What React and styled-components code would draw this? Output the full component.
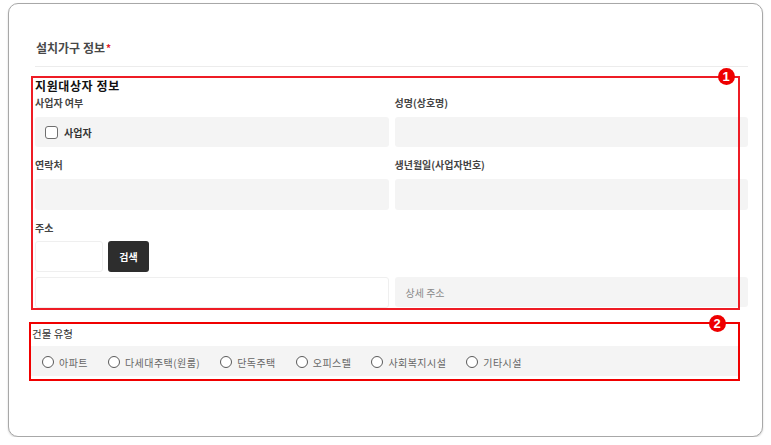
import React from "react";
import styled, { createGlobalStyle } from "styled-components";

const GlobalStyle = createGlobalStyle`
  html, body {
    margin: 0;
    padding: 0;
    background: #ffffff;
  }
  body {
    font-family: "Noto Sans CJK KR", "Noto Sans", sans-serif;
  }
`;

const buildingTypes = ["아파트", "다세대주택(원룸)", "단독주택", "오피스텔", "사회복지시설", "기타시설"];

function App() {
  return (
    <>
      <GlobalStyle />
      <Card>
        <Title>
          설치가구 정보<Required>*</Required>
        </Title>
        <Divider />

        <Section>
          <Marker $top={-2} $left={-4} $right={8} $bottom={-2} />
          <Badge $top={-10.5} $right={13.5}>1</Badge>
          <Heading>지원대상자 정보</Heading>
          <FieldGrid>
            <Field>
              <Label>사업자 여부</Label>
              <GrayBox $pad>
                <CheckBox />
                <CheckText>사업자</CheckText>
              </GrayBox>
            </Field>
            <Field>
              <Label>성명(상호명)</Label>
              <GrayBox />
            </Field>
            <Field>
              <Label>연락처</Label>
              <GrayBox $h={31} />
            </Field>
            <Field>
              <Label>생년월일(사업자번호)</Label>
              <GrayBox $h={31} />
            </Field>
          </FieldGrid>

          <AddressLabel>주소</AddressLabel>
          <PostRow>
            <WhiteBox $w={68} />
            <SearchButton>검색</SearchButton>
          </PostRow>
          <AddressRow>
            <WhiteBox />
            <GrayBox $pad>
              <Placeholder>상세 주소</Placeholder>
            </GrayBox>
          </AddressRow>
        </Section>

        <BuildingSection>
          <Marker $top={-5} $left={-2} $right={-1} $bottom={-5} $thick />
          <Badge $top={-12.5} $right={13.5}>2</Badge>
          <BuildingLabel>건물 유형</BuildingLabel>
          <RadioBar>
            {buildingTypes.map((t) => (
              <RadioItem key={t}>
                <RadioCircle />
                <RadioText>{t}</RadioText>
              </RadioItem>
            ))}
          </RadioBar>
        </BuildingSection>
      </Card>
    </>
  );
}

export default App;

const Card = styled.div`
  position: relative;
  box-sizing: border-box;
  margin: 3px 0 0 8px;
  width: 755px;
  height: 434px;
  border: 1px solid #a8a8a8;
  border-radius: 10px;
  box-shadow: 0 1px 2px rgba(0, 0, 0, 0.18);
  padding: 35px 14px 0 26px;
  background: #fff;
`;

const Title = styled.div`
  font-size: 12px;
  line-height: 18px;
  font-weight: 700;
  color: #484848;
  padding-left: 1px;
`;

const Required = styled.span`
  color: #e0202a;
  font-size: 10px;
  vertical-align: top;
  margin-left: 1px;
`;

const Divider = styled.div`
  height: 1px;
  background: #ececec;
  margin-top: 9px;
`;

const Section = styled.div`
  position: relative;
  margin-top: 11px;
`;

const Marker = styled.div`
  position: absolute;
  top: ${(p) => p.$top}px;
  left: ${(p) => p.$left}px;
  right: ${(p) => p.$right}px;
  bottom: ${(p) => p.$bottom}px;
  border: ${(p) => (p.$thick ? "2.5px solid #f00000" : "2px solid #ee1c25")};
  pointer-events: none;
`;

const Badge = styled.div`
  position: absolute;
  top: ${(p) => p.$top}px;
  right: ${(p) => p.$right}px;
  width: 17px;
  height: 17px;
  border-radius: 50%;
  background: #ee0000;
  color: #fff;
  font-family: "Liberation Sans", Arial, sans-serif;
  font-weight: 700;
  font-size: 13px;
  line-height: 17px;
  text-align: center;
`;

const Heading = styled.div`
  font-size: 12px;
  line-height: 16px;
  font-weight: 700;
  letter-spacing: 0.6px;
  color: #111;
`;

const FieldGrid = styled.div`
  display: grid;
  grid-template-columns: 1fr 1fr;
  column-gap: 6px;
  row-gap: 11px;
  margin-top: 2px;
`;

const Field = styled.div`
  display: flex;
  flex-direction: column;
  gap: 7px;
`;

const Label = styled.div`
  font-size: 10px;
  line-height: 14px;
  font-weight: 700;
  color: #444;
`;

const GrayBox = styled.div`
  box-sizing: border-box;
  height: ${(p) => p.$h || 30}px;
  background: #f4f4f4;
  border-radius: 3px;
  display: flex;
  align-items: center;
  padding-left: ${(p) => (p.$pad ? 10 : 0)}px;
`;

const CheckBox = styled.span`
  box-sizing: border-box;
  width: 13px;
  height: 13px;
  border: 1.5px solid #6f6f6f;
  border-radius: 3px;
  background: #fff;
`;

const CheckText = styled.span`
  margin-left: 6px;
  font-size: 10px;
  font-weight: 700;
  color: #333;
`;

const AddressLabel = styled(Label)`
  margin-top: 11px;
`;

const PostRow = styled.div`
  display: flex;
  gap: 5px;
  margin-top: 6px;
`;

const WhiteBox = styled.div`
  box-sizing: border-box;
  width: ${(p) => (p.$w ? `${p.$w}px` : "auto")};
  height: 31px;
  border: 1px solid #efefef;
  border-radius: 3px;
  background: #fff;
`;

const SearchButton = styled.button`
  width: 41px;
  height: 31px;
  border: none;
  border-radius: 3px;
  background: #2d2d2d;
  color: #fff;
  font-family: "Noto Sans CJK KR", sans-serif;
  font-size: 10px;
  font-weight: 700;
  padding: 0;
`;

const AddressRow = styled.div`
  display: grid;
  grid-template-columns: 1fr 1fr;
  column-gap: 6px;
  margin-top: 5px;
`;

const Placeholder = styled.span`
  font-size: 10px;
  color: #8a8a8a;
  padding-left: 1px;
`;

const BuildingSection = styled.div`
  position: relative;
  margin: 19px 9px 0 -4px;
`;

const BuildingLabel = styled.div`
  font-size: 10.5px;
  line-height: 14px;
  color: #333;
  padding-left: 1px;
`;

const RadioBar = styled.div`
  display: flex;
  align-items: center;
  height: 30px;
  margin-top: 5px;
  padding: 2px 0 0 11px;
  box-sizing: border-box;
  background: #f4f4f4;
`;

const RadioItem = styled.label`
  display: flex;
  align-items: center;
  gap: 5px;
  margin-right: 20px;
`;

const RadioCircle = styled.span`
  box-sizing: border-box;
  width: 12px;
  height: 12px;
  border: 1.5px solid #5a5a5a;
  border-radius: 50%;
  background: #fff;
`;

const RadioText = styled.span`
  font-size: 10px;
  letter-spacing: 0.45px;
  color: #666;
`;
